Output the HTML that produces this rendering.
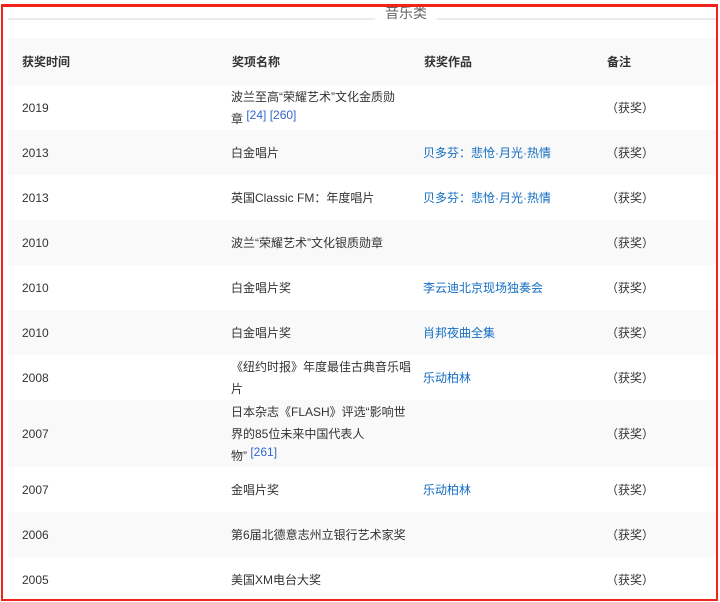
<!DOCTYPE html>
<html><head><meta charset="utf-8"><style>
body{margin:0;width:720px;height:602px;background:#fff;overflow:hidden;font-family:"Liberation Sans","Noto Sans CJK SC",sans-serif;font-size:12px;color:#333;position:relative}
.frame{position:absolute;left:1px;top:4px;width:713px;height:592px;border:2px solid #f2221a;border-top-width:3px}
.title{position:absolute;left:0;top:4px;width:720px;height:20px}
.line{position:absolute;top:14px;height:2px;background:#ececec}
.tt{position:absolute;left:385px;top:3px;font-size:14px;color:#666;background:#fff}
table{position:absolute;left:8px;top:38px;width:710px;border-collapse:collapse}
td{padding:0;vertical-align:middle;line-height:22px}
td:nth-child(1){width:209px;padding-left:14px}
td:nth-child(2){width:192px}
td:nth-child(3){width:183px}
tr{height:45px}
tr.g{background:#f9f9f9}
th{font-weight:bold;text-align:left;height:45px}
th:first-child{padding-left:14px}
a{color:#136ec2;text-decoration:none}
sup{color:#3366cc;font-size:12px;vertical-align:4px;line-height:0}
.n{display:block;width:172px}
</style></head><body>
<div class="title"><div class="line" style="left:8px;width:367px"></div><div class="line" style="left:437px;width:280px"></div></div>
<div class="tt">音乐类</div>
<table>
<tr class="g"><th>获奖时间</th><th>奖项名称</th><th>获奖作品</th><th>备注</th></tr>
<tr><td>2019</td><td><span class="n">波兰至高“荣耀艺术”文化金质勋章 <sup>[24]</sup> <sup>[260]</sup></span></td><td></td><td>（获奖）</td></tr>
<tr class="g"><td>2013</td><td>白金唱片</td><td><a>贝多芬：悲怆·月光·热情</a></td><td>（获奖）</td></tr>
<tr><td>2013</td><td>英国Classic FM：年度唱片</td><td><a>贝多芬：悲怆·月光·热情</a></td><td>（获奖）</td></tr>
<tr class="g"><td>2010</td><td>波兰“荣耀艺术”文化银质勋章</td><td></td><td>（获奖）</td></tr>
<tr><td>2010</td><td>白金唱片奖</td><td><a>李云迪北京现场独奏会</a></td><td>（获奖）</td></tr>
<tr class="g"><td>2010</td><td>白金唱片奖</td><td><a>肖邦夜曲全集</a></td><td>（获奖）</td></tr>
<tr><td>2008</td><td><span class="n" style="width:180px">《纽约时报》年度最佳古典音乐唱片</span></td><td><a>乐动柏林</a></td><td>（获奖）</td></tr>
<tr class="g" style="height:67px"><td>2007</td><td><span class="n" style="width:182px">日本杂志《FLASH》评选“影响世<br>界的85位未来中国代表人<br>物” <sup>[261]</sup></span></td><td></td><td>（获奖）</td></tr>
<tr><td>2007</td><td>金唱片奖</td><td><a>乐动柏林</a></td><td>（获奖）</td></tr>
<tr class="g"><td>2006</td><td>第6届北德意志州立银行艺术家奖</td><td></td><td>（获奖）</td></tr>
<tr><td>2005</td><td>美国XM电台大奖</td><td></td><td>（获奖）</td></tr>
</table>
<div class="frame"></div>
</body></html>
